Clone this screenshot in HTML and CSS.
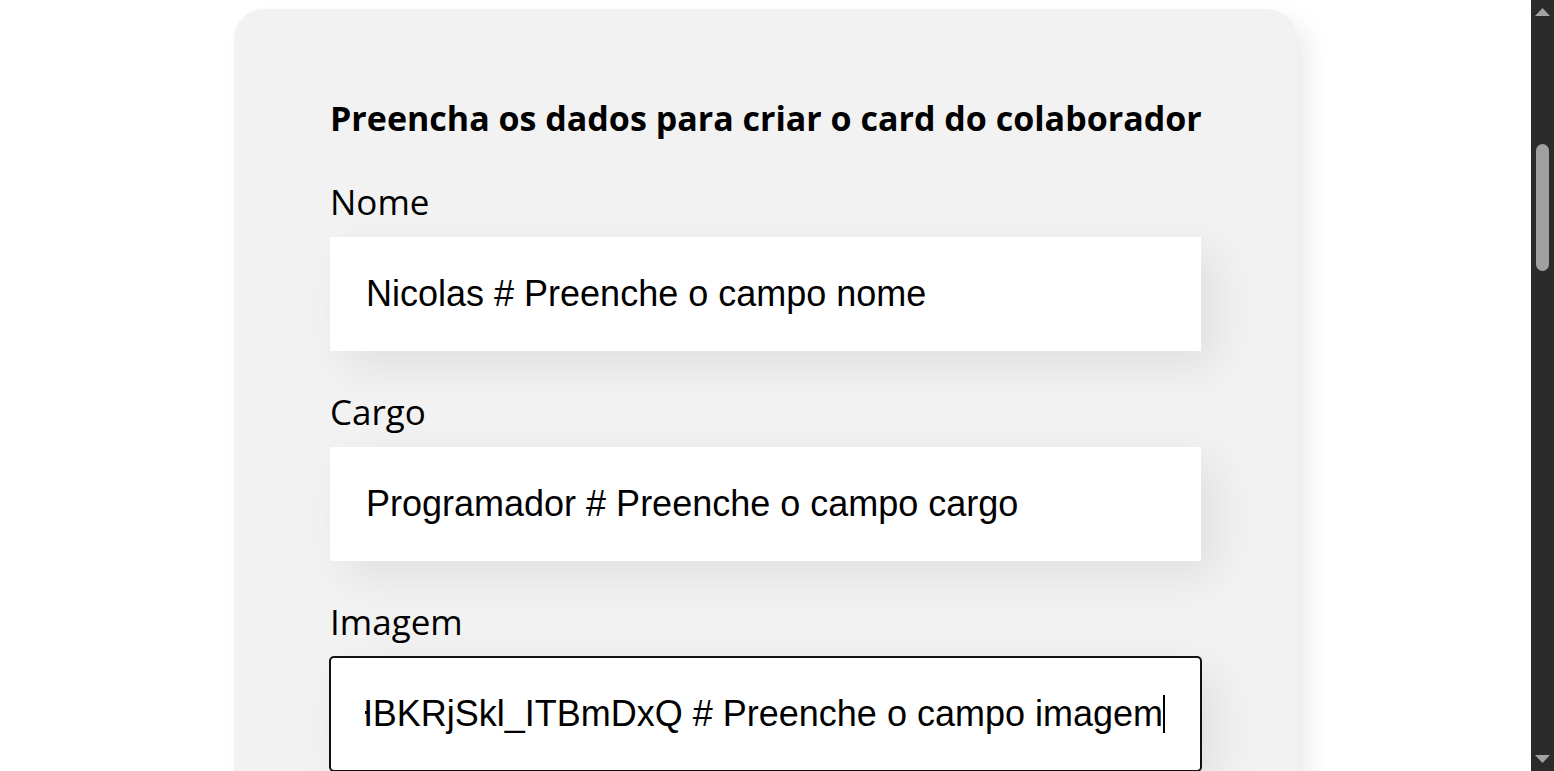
FILE: index.html
```html
<!DOCTYPE html>
<html lang="pt-BR">
<head>
<meta charset="utf-8">
<title>Organo</title>
<link rel="stylesheet" href="styles.css">
</head>
<body>
<div class="page">
  <main class="main">
    <section class="formulario">
      <form class="form">
        <h2 class="titulo">Preencha os dados para criar o card do colaborador</h2>
        <div class="campo">
          <label class="rotulo">Nome</label>
          <div class="entrada"><span class="valor">Nicolas # Preenche o campo nome</span></div>
        </div>
        <div class="campo">
          <label class="rotulo">Cargo</label>
          <div class="entrada"><span class="valor">Programador # Preenche o campo cargo</span></div>
        </div>
        <div class="campo">
          <label class="rotulo">Imagem</label>
          <div class="entrada foco">
            <div class="clip"><span class="valor">https://lh3.googleusercontent.com/a/ACg8ocJ4HBKRjSkl_ITBmDxQ # Preenche o campo imagem</span><span class="caret"></span></div>
          </div>
        </div>
        <div class="campo">
          <label class="rotulo">Time</label>
          <div class="entrada"><span class="valor">Programação</span></div>
        </div>
      </form>
    </section>
  </main>
  <aside class="scrollbar">
    <svg class="seta" width="23" height="17" viewBox="0 0 23 17"><polygon points="4,16 11.5,8 19,16" fill="#a3a3a3"/></svg>
    <div class="trilho"><div class="polegar"></div></div>
    <svg class="seta" width="23" height="17" viewBox="0 0 23 17"><polygon points="4,1 19,1 11.5,9" fill="#a3a3a3"/></svg>
  </aside>
</div>
</body>
</html>
```
FILE: styles.css
```css
html, body {
  margin: 0;
  padding: 0;
  height: 100%;
  overflow: hidden;
  background: #ffffff;
}

.page {
  display: flex;
  height: 100vh;
}

.main {
  flex: 1;
  display: flex;
  justify-content: center;
  align-items: flex-start;
  padding-top: 9px;
  min-width: 0;
}

.formulario {
  display: flex;
  justify-content: center;
}

.form {
  width: 871px;
  background: #f2f2f2;
  border-radius: 30px;
  padding: 54px 96px 80px;
  box-shadow: 12px 12px 24px rgba(0, 0, 0, 0.08);
}

.titulo {
  font-family: "Open Sans", "Noto Sans", sans-serif;
  font-weight: 700;
  font-size: 34px;
  line-height: 46px;
  margin: 32px 0 34px;
  color: #000;
  white-space: nowrap;
}

.campo {
  margin: 36px 0;
}

.rotulo {
  display: block;
  font-family: "Open Sans", "Noto Sans", sans-serif;
  font-size: 35px;
  line-height: 48px;
  padding-top: 1px;
  margin-bottom: 11px;
  color: #000;
}

.entrada {
  background: #fff;
  padding: 36px;
  height: 42px;
  box-shadow: 15px 15px 45px rgba(0, 0, 0, 0.08);
  font-family: "Liberation Sans", Arial, sans-serif;
  font-size: 36px;
  line-height: 42px;
  color: #000;
  white-space: nowrap;
  overflow: hidden;
}

.foco {
  outline: 2px solid #111;
  outline-offset: -1px;
  border-radius: 4px;
}

.clip {
  display: flex;
  justify-content: flex-end;
  align-items: center;
  overflow: hidden;
  height: 42px;
  margin-left: -1px;
}

.clip .valor {
  flex-shrink: 0;
}

.caret {
  flex-shrink: 0;
  width: 2px;
  height: 38px;
  background: #000;
}

.scrollbar {
  width: 23px;
  flex-shrink: 0;
  background: #2b2b2b;
  display: flex;
  flex-direction: column;
}

.seta {
  display: block;
  flex-shrink: 0;
}

.trilho {
  flex: 1;
  padding-top: 127px;
}

.polegar {
  width: 13px;
  height: 127px;
  margin-left: 5px;
  border-radius: 7px;
  background: #a0a0a0;
}
```
